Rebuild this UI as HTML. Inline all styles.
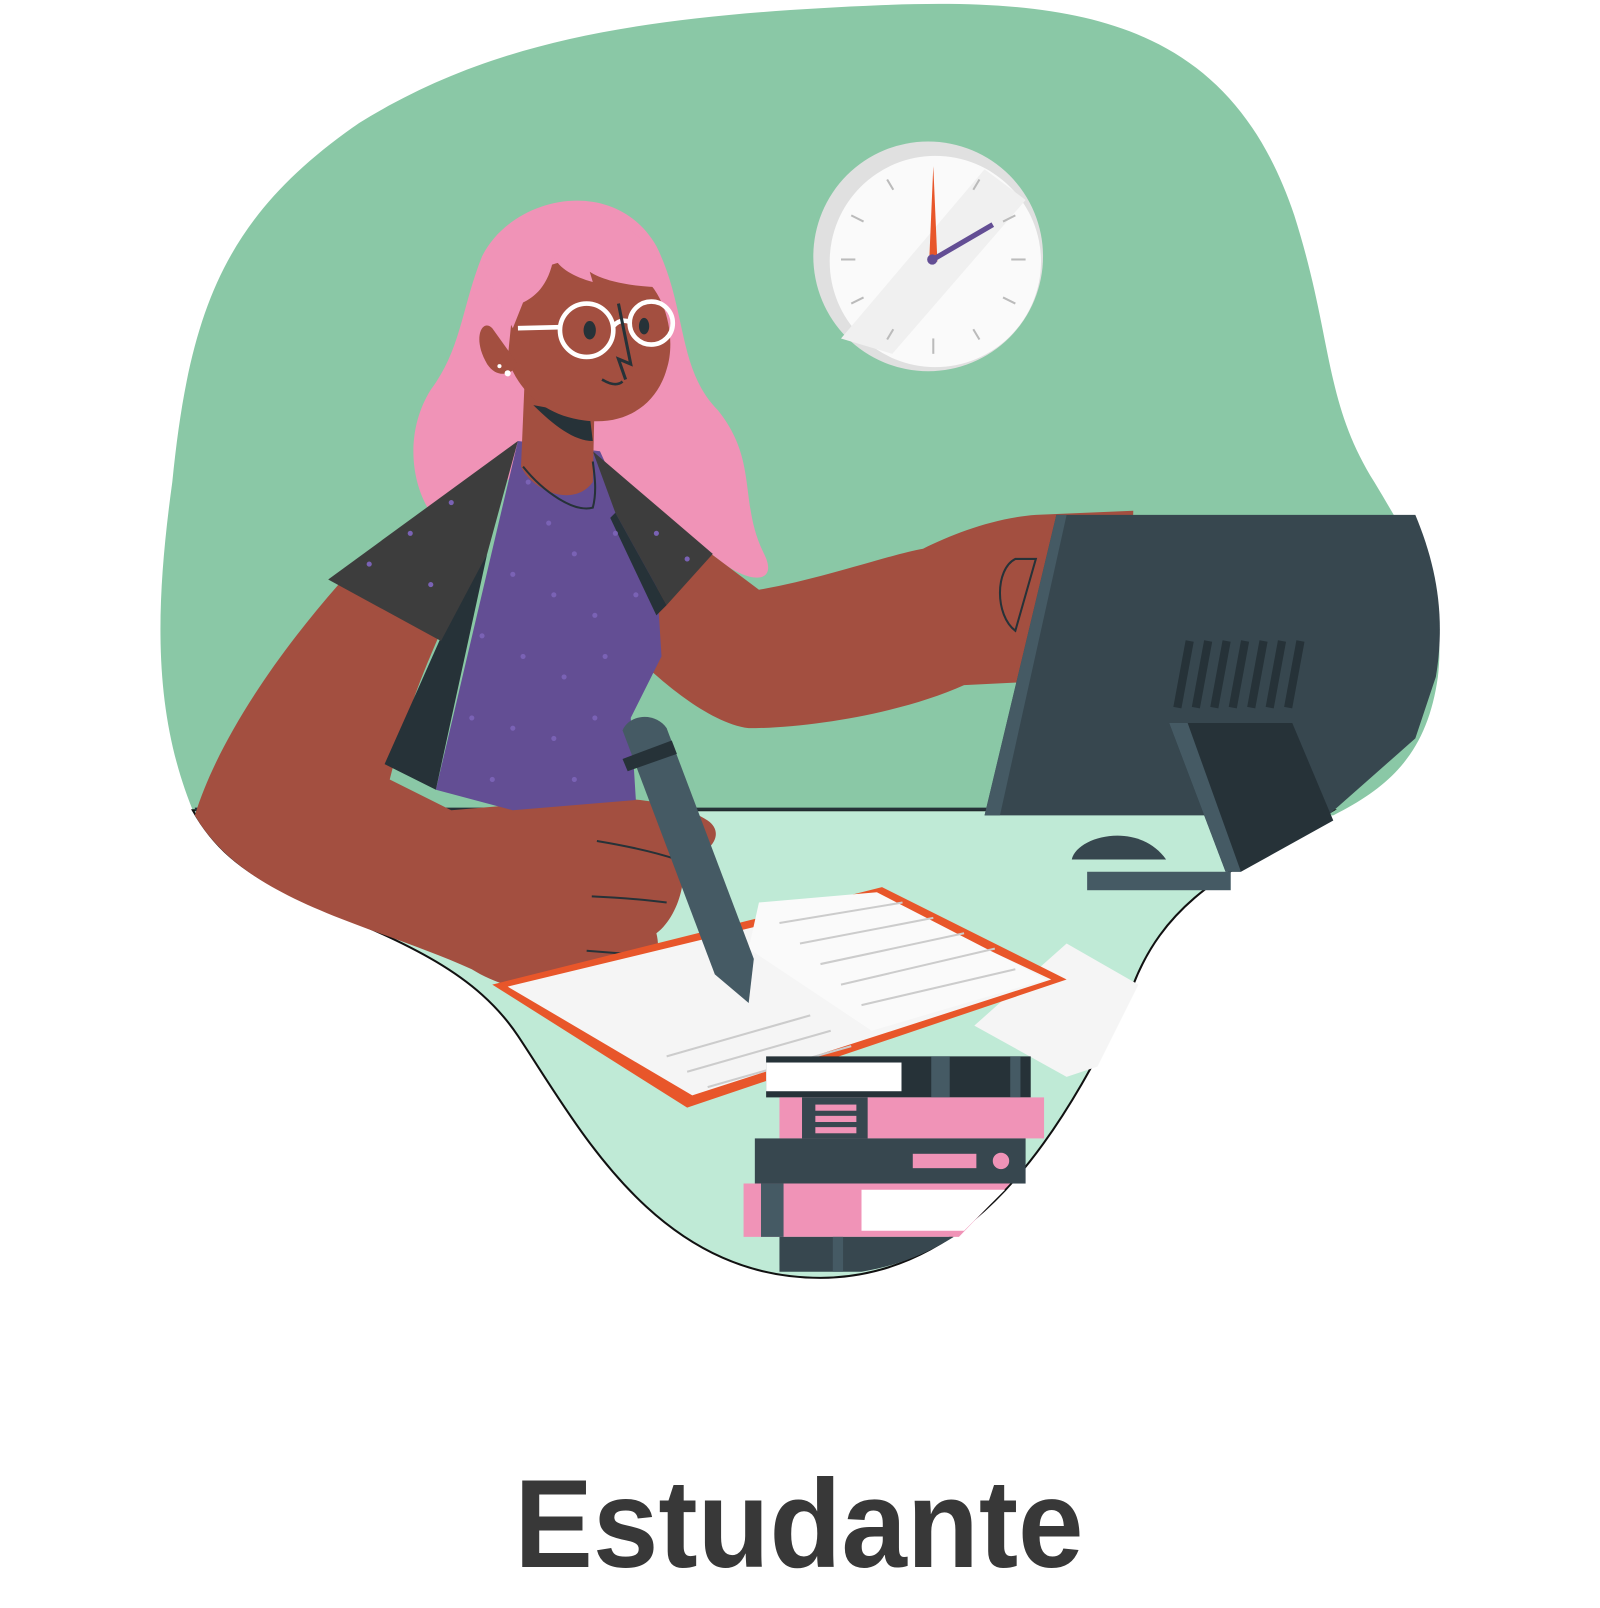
<!DOCTYPE html>
<html><head><meta charset="utf-8"><style>
html,body{margin:0;padding:0;background:#fff;width:1600px;height:1608px;overflow:hidden}
svg{display:block}
</style></head><body>
<svg width="1600" height="1608" viewBox="0 0 1600 1608" xmlns="http://www.w3.org/2000/svg">
<g transform="scale(1.0256)">
<path d="M190 795 C150 700 150 600 168 470 C185 300 220 210 350 120 C480 40 620 15 860 5 C1060 -3 1200 25 1262 210 C1300 330 1290 390 1340 470 C1385 545 1410 590 1402 660 C1392 730 1360 765 1300 795 Z" fill="#8ac8a6"/>
<path d="M188 790 L1300 790 C1210 845 1140 870 1105 960 C1045 1085 960 1245 800 1246 C640 1246 565 1100 505 1010 C465 950 400 920 300 880 C230 850 205 820 188 790 Z" fill="#bfead6" stroke="#111" stroke-width="2"/>
<line x1="190" y1="789" x2="1300" y2="789" stroke="#263238" stroke-width="3"/>
<circle cx="905" cy="250" r="112" fill="#e0e0e0"/>
<circle cx="912" cy="255" r="103" fill="#fafafa"/>
<path d="M820 330 L960 165 L1000 195 L870 345 Z" fill="#f0f0f0"/>
<g stroke="#bbb" stroke-width="2">
<line x1="910" y1="330" x2="910" y2="345"/><line x1="820" y1="253" x2="834" y2="253"/><line x1="986" y1="253" x2="1000" y2="253"/>
<line x1="865" y1="175" x2="871" y2="185"/><line x1="830" y1="210" x2="842" y2="216"/><line x1="955" y1="175" x2="949" y2="185"/>
<line x1="990" y1="210" x2="978" y2="216"/><line x1="830" y1="296" x2="842" y2="290"/><line x1="990" y1="296" x2="978" y2="290"/>
<line x1="865" y1="331" x2="871" y2="321"/><line x1="955" y1="331" x2="949" y2="321"/></g>
<path d="M906 255 L910 162 L914 255 Z" fill="#e8562a"/>
<line x1="908" y1="254" x2="968" y2="219" stroke="#634e94" stroke-width="5"/>
<circle cx="909" cy="253" r="5" fill="#634e94"/>
<path d="M470 250 C500 190 600 170 640 240 C670 300 660 360 700 400 C740 450 720 490 745 540 C760 570 730 570 700 545 L560 440 L420 500 C400 470 395 420 420 380 C450 340 450 300 470 250 Z" fill="#f093b7"/>
<path d="M600 470 L740 575 C800 565 870 540 900 535 C930 520 970 505 1010 502 L1105 498 L1100 660 L940 668 C880 695 790 710 730 710 C690 705 640 660 620 640 Z" fill="#a34f40"/>
<path d="M990 545 C970 555 970 600 990 615 L1010 545 Z" fill="none" stroke="#263238" stroke-width="2"/>
<path d="M330 570 C260 650 210 730 190 795 C240 880 360 900 460 945 C500 970 560 975 600 970 C640 960 645 930 640 910 C660 895 670 860 665 840 C700 830 705 810 690 800 C660 780 600 775 560 780 L440 790 L380 760 C400 680 420 640 430 615 Z" fill="#a34f40"/>
<g stroke="#263238" stroke-width="2" fill="none"><path d="M582 820 Q630 828 660 838"/><path d="M577 874 Q620 876 650 880"/><path d="M572 927 Q610 930 640 932"/></g>
<path d="M505 430 L585 440 L640 560 L645 640 L615 700 L620 780 L500 790 L425 770 Z" fill="#634e94"/>
<path d="M425 770 L375 745 L435 610 L475 540 Z" fill="#263238"/>
<path d="M505 430 L320 565 L430 625 L475 540 Z" fill="#3d3d3d"/>
<path d="M578 440 L695 540 L650 590 L600 500 Z" fill="#3d3d3d"/>
<path d="M600 500 L650 590 L640 600 L595 505 Z" fill="#263238"/>
<g fill="#7a62b5">
<circle cx="515" cy="470" r="2.5"/><circle cx="535" cy="510" r="2.5"/><circle cx="560" cy="540" r="2.5"/><circle cx="600" cy="520" r="2.5"/>
<circle cx="500" cy="560" r="2.5"/><circle cx="540" cy="580" r="2.5"/><circle cx="580" cy="600" r="2.5"/><circle cx="620" cy="580" r="2.5"/>
<circle cx="470" cy="620" r="2.5"/><circle cx="510" cy="640" r="2.5"/><circle cx="550" cy="660" r="2.5"/><circle cx="590" cy="640" r="2.5"/>
<circle cx="460" cy="700" r="2.5"/><circle cx="500" cy="710" r="2.5"/><circle cx="540" cy="720" r="2.5"/><circle cx="580" cy="700" r="2.5"/>
<circle cx="440" cy="490" r="2.5"/><circle cx="400" cy="520" r="2.5"/><circle cx="360" cy="550" r="2.5"/><circle cx="420" cy="570" r="2.5"/>
<circle cx="640" cy="520" r="2.5"/><circle cx="670" cy="545" r="2.5"/><circle cx="480" cy="760" r="2.5"/><circle cx="560" cy="760" r="2.5"/></g>
<path d="M512 360 L580 380 L578 470 C560 495 520 480 508 455 Z" fill="#a34f40"/>
<path d="M520 395 C540 415 560 430 578 430 L575 405 Z" fill="#263238"/>
<path d="M510 455 C530 480 560 500 578 495 C582 480 580 465 578 450" fill="none" stroke="#263238" stroke-width="2"/>
<path d="M500 300 C510 255 560 245 610 260 C650 275 660 330 650 360 C640 395 610 415 570 410 C530 405 505 380 495 350 Z" fill="#a34f40"/>
<path d="M480 320 C470 310 460 330 475 355 C485 370 500 365 505 355 Z" fill="#a34f40"/>
<circle cx="495" cy="364" r="3" fill="#fff"/><circle cx="487" cy="357" r="2" fill="#fff"/>
<path d="M470 260 C490 200 590 180 640 250 L648 280 C620 280 590 275 575 265 L578 275 C560 270 545 262 540 250 C535 280 520 290 510 295 L500 320 Z" fill="#f093b7"/>
<g fill="none" stroke="#fff" stroke-width="4.5"><circle cx="572" cy="322" r="26"/><circle cx="635" cy="315" r="21"/><path d="M598 318 Q605 310 614 314"/><line x1="546" y1="319" x2="505" y2="320"/></g>
<ellipse cx="575" cy="322" rx="6" ry="9" fill="#263238"/><ellipse cx="628" cy="318" rx="5" ry="8" fill="#263238"/>
<path d="M603 296 L615 355 L603 350 L610 370" fill="none" stroke="#263238" stroke-width="3"/>
<path d="M587 370 Q600 378 607 372" fill="none" stroke="#263238" stroke-width="2.5"/>
<path d="M1030 502 L1380 502 C1400 550 1410 600 1400 660 L1380 720 L1295 795 L960 795 Z" fill="#37474f"/>
<path d="M1030 502 L1040 502 L975 795 L960 795 Z" fill="#455a64"/>
<path d="M1140 705 L1260 705 L1300 800 L1210 850 L1195 850 Z" fill="#263238"/>
<path d="M1140 705 L1158 705 L1210 850 L1195 850 Z" fill="#455a64"/>
<rect x="1060" y="850" width="140" height="18" fill="#455a64"/>
<g stroke="#263238" stroke-width="8"><line x1="1160" y1="625" x2="1148" y2="690"/><line x1="1178" y1="625" x2="1166" y2="690"/><line x1="1196" y1="625" x2="1184" y2="690"/><line x1="1214" y1="625" x2="1202" y2="690"/><line x1="1232" y1="625" x2="1220" y2="690"/><line x1="1250" y1="625" x2="1238" y2="690"/><line x1="1268" y1="625" x2="1256" y2="690"/></g>
<path d="M1045 838 C1050 815 1110 800 1137 838 Z" fill="#37474f"/>
<path d="M1040 920 L1110 960 L1070 1040 L1040 1050 L950 1000 Z" fill="#f5f5f5"/>
<path d="M480 960 L860 865 L1040 955 L670 1080 Z" fill="#e8562a"/>
<path d="M495 962 L855 875 L1025 955 L675 1068 Z" fill="#f5f5f5"/>
<path d="M740 880 L855 870 L1020 955 L850 1005 L730 925 Z" fill="#fafafa"/>
<g stroke="#ccc" stroke-width="2"><line x1="760" y1="900" x2="880" y2="880"/><line x1="780" y1="920" x2="910" y2="895"/><line x1="800" y1="940" x2="940" y2="910"/><line x1="820" y1="960" x2="970" y2="925"/><line x1="840" y1="980" x2="990" y2="945"/><line x1="650" y1="1030" x2="790" y2="990"/><line x1="670" y1="1045" x2="810" y2="1005"/><line x1="690" y1="1060" x2="830" y2="1020"/></g>
<path d="M607 712 C615 695 640 695 650 710 L735 935 L730 978 L697 950 Z" fill="#455a64"/>
<path d="M607 740 L655 722 L660 735 L612 752 Z" fill="#263238"/>
<rect x="747" y="1030" width="258" height="40" fill="#263238"/>
<rect x="747" y="1036" width="132" height="28" fill="#fff"/>
<rect x="908" y="1030" width="18" height="40" fill="#455a64"/><rect x="985" y="1030" width="10" height="40" fill="#455a64"/>
<rect x="760" y="1070" width="258" height="40" fill="#f093b7"/>
<rect x="782" y="1070" width="64" height="40" fill="#37474f"/>
<g fill="#f093b7"><rect x="795" y="1077" width="40" height="6"/><rect x="795" y="1088" width="40" height="6"/><rect x="795" y="1099" width="40" height="6"/></g>
<rect x="736" y="1110" width="264" height="44" fill="#37474f"/>
<rect x="890" y="1125" width="62" height="14" fill="#f093b7"/><circle cx="976" cy="1132" r="8" fill="#f093b7"/>
<path d="M725 1154 L985 1154 L935 1206 L725 1206 Z" fill="#f093b7"/>
<rect x="742" y="1154" width="22" height="52" fill="#455a64"/>
<path d="M840 1160 L980 1160 L940 1200 L840 1200 Z" fill="#fff"/>
<path d="M760 1206 L930 1206 C900 1225 870 1235 840 1240 L760 1240 Z" fill="#37474f"/>
<rect x="812" y="1206" width="10" height="34" fill="#455a64"/>
<text x="779" y="1528" text-anchor="middle" font-family="Liberation Sans, sans-serif" font-weight="bold" font-size="122" fill="#383838" textLength="555" lengthAdjust="spacingAndGlyphs">Estudante</text>
</g>
</svg>
</body></html>
